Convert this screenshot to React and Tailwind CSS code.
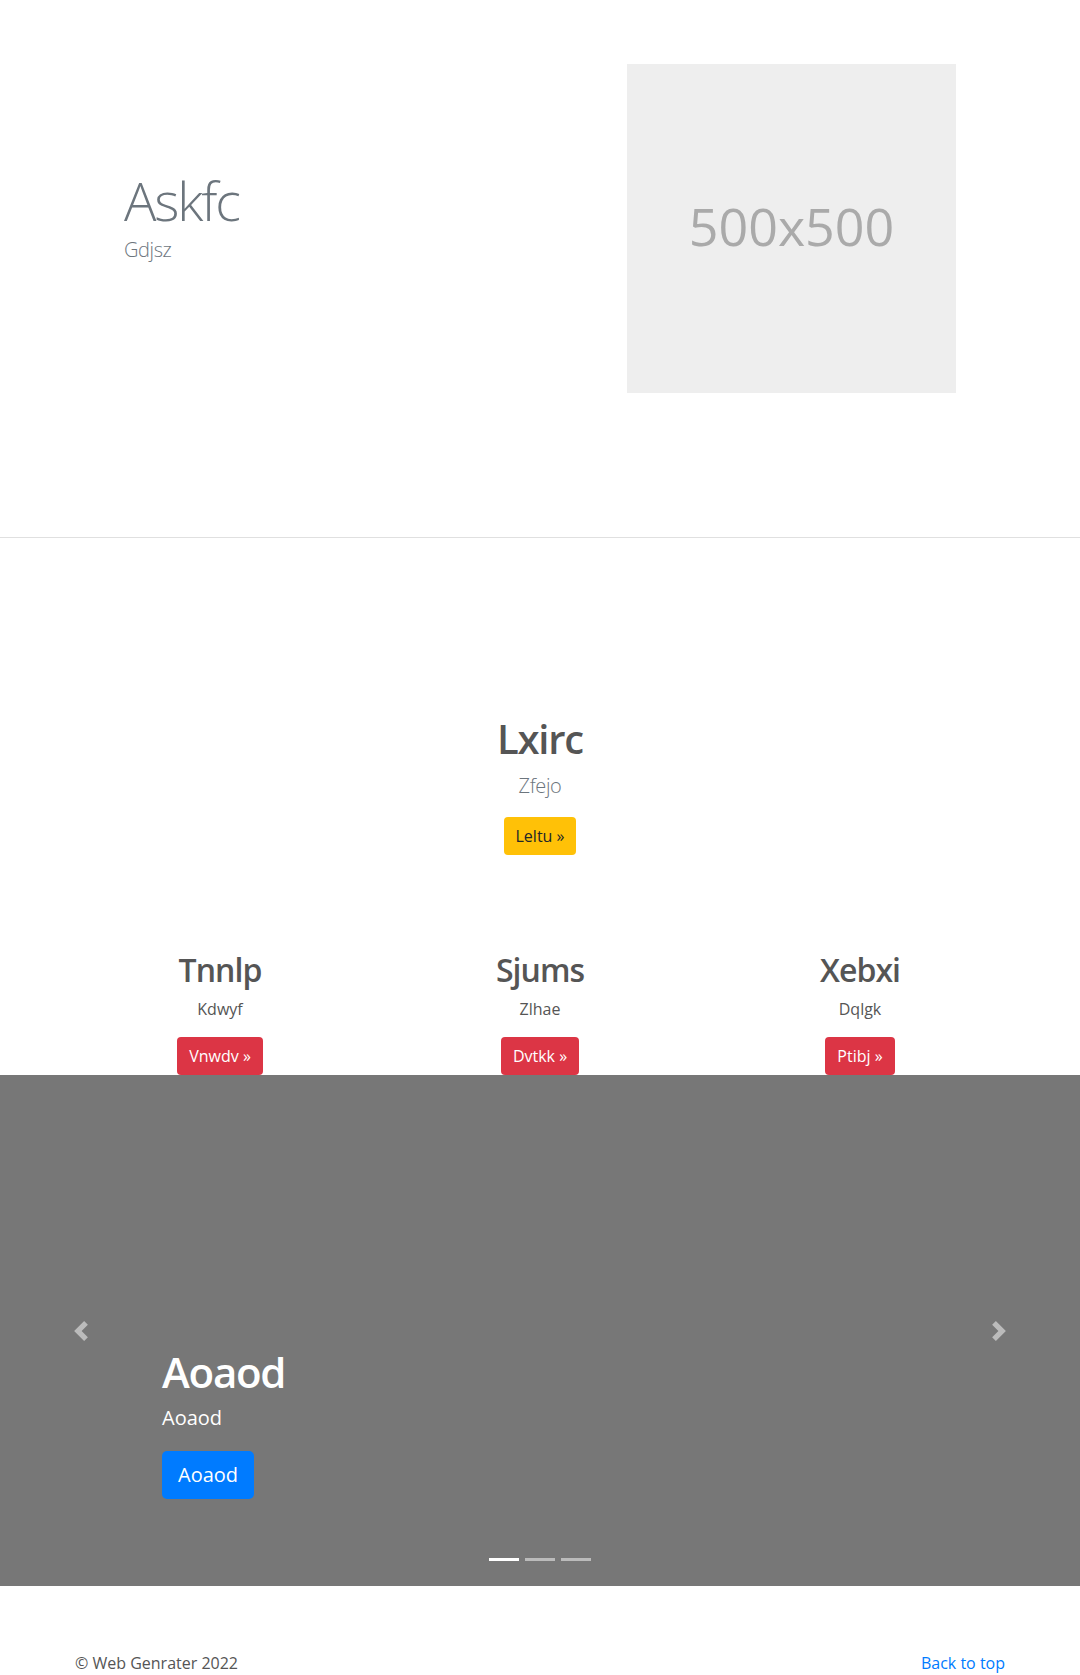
const font = { fontFamily: '"Open Sans", "Noto Sans", "Liberation Sans", sans-serif' };

function ChevronIcon({ flip }) {
  return (
    <svg viewBox="0 0 8 8" className="w-5 h-5" fill="#fff">
      {flip ? (
        <path d="M2.75 0l-1.5 1.5L3.75 4l-2.5 2.5L2.75 8l4-4-4-4z" />
      ) : (
        <path d="M5.25 0l-4 4 4 4 1.5-1.5L4.25 4l2.5-2.5L5.25 0z" />
      )}
    </svg>
  );
}

const features = [
  { title: 'Tnnlp', text: 'Kdwyf', cta: 'Vnwdv' },
  { title: 'Sjums', text: 'Zlhae', cta: 'Dvtkk' },
  { title: 'Xebxi', text: 'Dqlgk', cta: 'Ptibj' },
];

export default function App() {
  return (
    <div className="bg-white text-[#212529]" style={font}>
      {/* hero */}
      <section className="pt-[64px] pb-[144px]">
        <div className="w-[960px] mx-auto px-[64px] flex items-start justify-between">
          <div className="mt-[104px]">
            <h1 className="text-[54px] leading-[65px] font-light tracking-[-0.04em] text-[#6c757d]">Askfc</h1>
            <p className="mt-[2px] text-[20px] leading-[30px] font-light tracking-[-0.02em] text-[#6c757d]">Gdjsz</p>
          </div>
          <div className="w-[329px] h-[329px] bg-[#eeeeee] flex items-center justify-center pb-[6px]">
            <span className="text-[52px] text-[#aaaaaa]">500x500</span>
          </div>
        </div>
      </section>

      <hr className="border-0 border-t border-[#e0e0e0]" />

      {/* intro */}
      <section className="pt-[177px] text-center">
        <h2 className="text-[40px] leading-[48px] font-semibold tracking-[-0.03em] text-[#555]">Lxirc</h2>
        <p className="mt-2 text-[20px] leading-[30px] font-light tracking-[-0.02em] text-[#6c757d]">Zfejo</p>
        <button className="mt-4 h-[38px] px-3 rounded bg-[#ffc107] text-[16px] text-[#212529]">
          Leltu »
        </button>
      </section>

      {/* features */}
      <section className="pt-[96px]">
        <div className="w-[960px] mx-auto grid grid-cols-3">
          {features.map((f) => (
            <div key={f.title} className="text-center">
              <h3 className="text-[32px] leading-[38px] font-semibold tracking-[-0.03em] text-[#555]">{f.title}</h3>
              <p className="mt-2 text-[16px] leading-[24px] text-[#555]">{f.text}</p>
              <button className="mt-4 h-[38px] px-3 rounded bg-[#dc3545] text-[16px] text-white">
                {f.cta} »
              </button>
            </div>
          ))}
        </div>
      </section>

      {/* carousel */}
      <section className="relative h-[511px] bg-[#777777]">
        <button className="absolute left-0 top-0 bottom-0 w-[15%] flex items-center justify-center opacity-50">
          <ChevronIcon />
        </button>
        <button className="absolute right-0 top-0 bottom-0 w-[15%] flex items-center justify-center opacity-50">
          <ChevronIcon flip />
        </button>
        <div className="absolute left-[15%] bottom-[87px] text-white">
          <h2 className="text-[42px] leading-[50px] font-semibold tracking-[-0.03em]">Aoaod</h2>
          <p className="mt-[6px] text-[20px] leading-[30px]">Aoaod</p>
          <button className="mt-[18px] h-[48px] px-4 rounded-[5px] bg-[#007bff] text-[20px] text-white">
            Aoaod
          </button>
        </div>
        <div className="absolute bottom-[25px] left-0 right-0 flex justify-center gap-[6px]">
          <span className="w-[30px] h-[3px] bg-white" />
          <span className="w-[30px] h-[3px] bg-white opacity-50" />
          <span className="w-[30px] h-[3px] bg-white opacity-50" />
        </div>
      </section>

      {/* footer */}
      <footer className="pt-[65px] pb-8">
        <div className="w-[960px] mx-auto px-[15px] flex justify-between text-[16px] leading-[24px]">
          <p className="text-[#555]">© Web Genrater 2022</p>
          <a href="#" className="text-[#007bff]">Back to top</a>
        </div>
      </footer>
    </div>
  );
}
